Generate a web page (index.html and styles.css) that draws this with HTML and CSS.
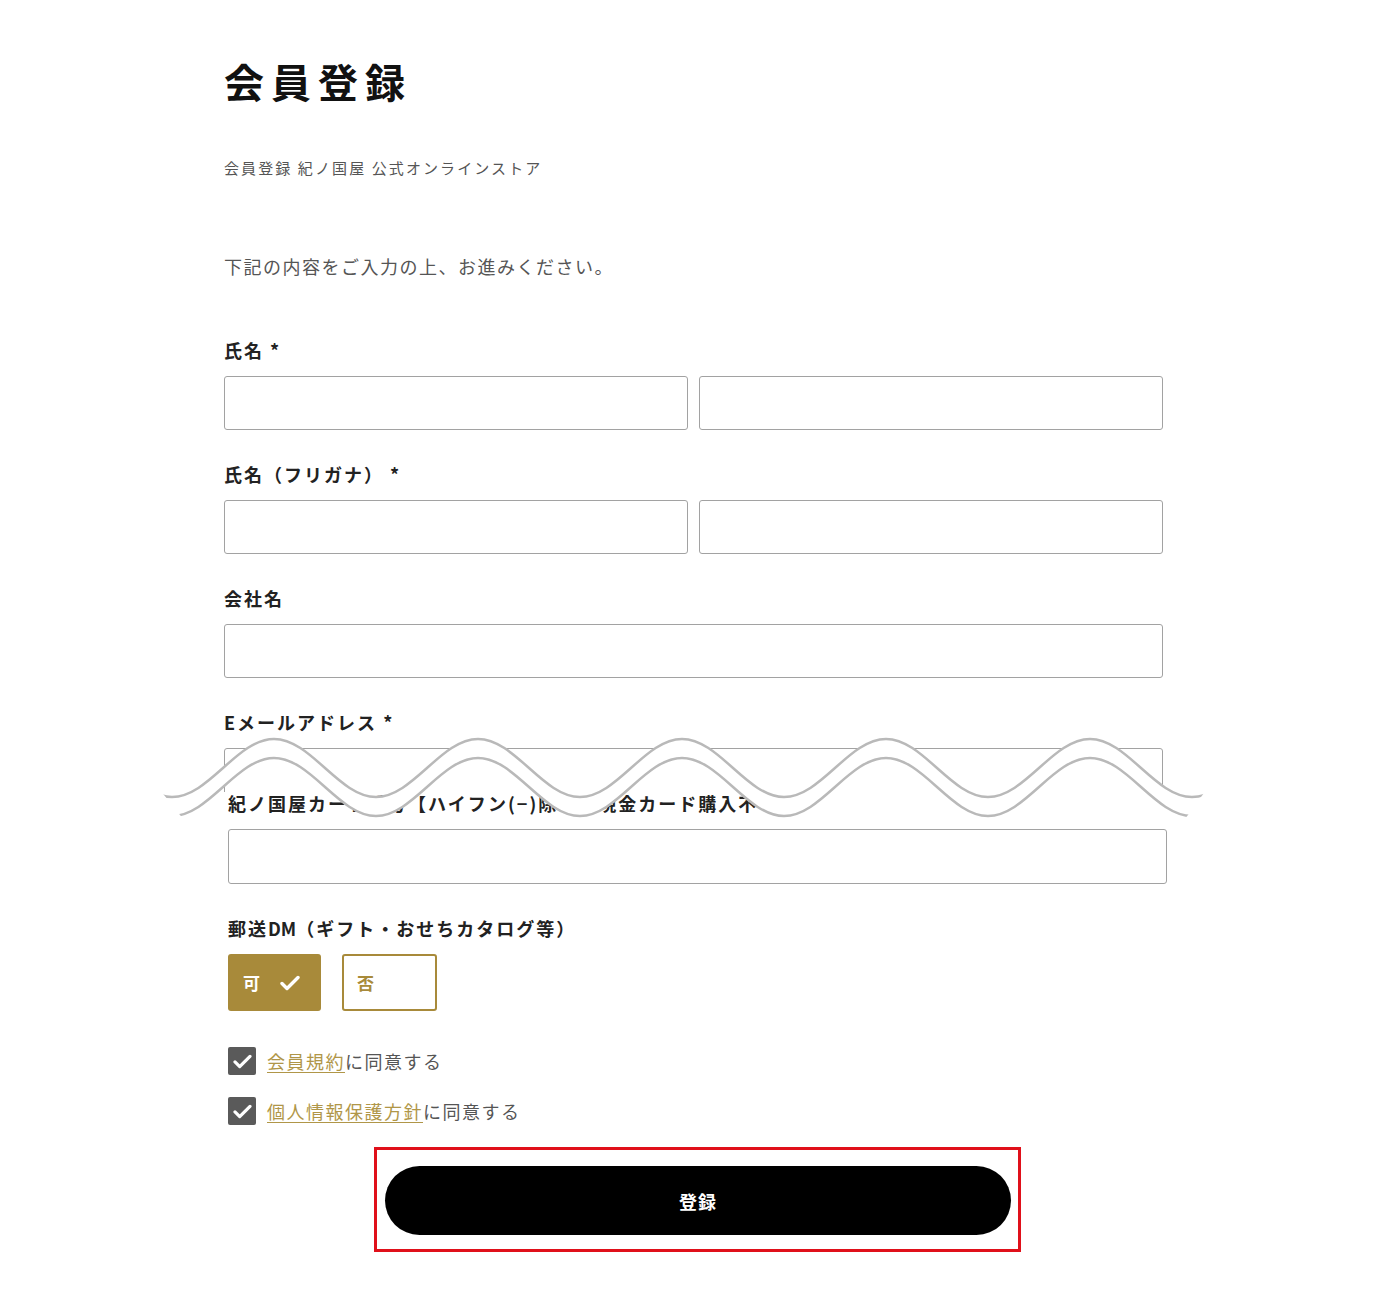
FILE: index.html
```html
<!DOCTYPE html>
<html lang="ja">
  <head>
    <meta charset="utf-8">
    <title>会員登録</title>
    <link rel="stylesheet" href="styles.css">
  </head>
  <body>
    <div class="page">
      <h1 class="title">会員登録</h1>
      <p class="lead">会員登録 紀ノ国屋 公式オンラインストア</p>
      <p class="intro">下記の内容をご入力の上、お進みください。</p>

      <div class="field">
        <div class="label">氏名 *</div>
        <div class="pair">
          <input class="input" type="text">
          <input class="input" type="text">
        </div>
      </div>
      <div class="field">
        <div class="label">氏名（フリガナ） *</div>
        <div class="pair">
          <input class="input" type="text">
          <input class="input" type="text">
        </div>
      </div>
      <div class="field">
        <div class="label">会社名</div>
        <input class="input" type="text">
      </div>
      <div class="field">
        <div class="label">Eメールアドレス *</div>
        <div class="cut-box">
          <input class="input" type="email">
        </div>
      </div>

      <div class="lower">
        <div class="field">
          <div class="label">紀ノ国屋カード番号【ハイフン(−)除く】現金カード購入不可</div>
          <input class="input input-tall" type="text">
        </div>
        <div class="field">
          <div class="label">郵送<span class="latin">DM</span>（ギフト・おせちカタログ等）</div>
          <div class="toggles">
            <span class="toggle toggle-on">可
              <svg class="tick" viewBox="0 0 20 16" width="20" height="16"><path d="M2 8.5l5 5L18 2.5" fill="none" stroke="#fff" stroke-width="3.4" stroke-linecap="round" stroke-linejoin="round"/></svg>
            </span>
            <span class="toggle toggle-off">否</span>
          </div>
        </div>

        <div class="agree">
          <label class="agree-row">
            <span class="box"><svg viewBox="0 0 20 16" width="19" height="15"><path d="M2 8.5l5 5L18 2.5" fill="none" stroke="#fff" stroke-width="3.4" stroke-linecap="round" stroke-linejoin="round"/></svg></span>
            <span><a class="link" href="#">会員規約</a>に同意する</span>
          </label>
          <label class="agree-row">
            <span class="box"><svg viewBox="0 0 20 16" width="19" height="15"><path d="M2 8.5l5 5L18 2.5" fill="none" stroke="#fff" stroke-width="3.4" stroke-linecap="round" stroke-linejoin="round"/></svg></span>
            <span><a class="link" href="#">個人情報保護方針</a>に同意する</span>
          </label>
        </div>

        <div class="submit-wrap">
          <div class="highlight">
            <button class="submit" type="button">登録</button>
          </div>
        </div>
      </div>
    </div>

    <!-- page break marker drawn over the form -->
    <svg class="break" viewBox="150 730 1070 95" width="1070" height="95">
      <defs>
        <clipPath id="cut">
          <polygon points="112,730 1250,730 1177,830 192,830"/>
        </clipPath>
      </defs>
      <g clip-path="url(#cut)">
        <path fill="#fff" d="M70,739 C107,739 135,797 172,797 S237,739 274,739 S339,797 376,797 S441,739 478,739 S543,797 580,797 S645,739 682,739 S747,797 784,797 S849,739 886,739 S951,797 988,797 S1053,739 1090,739 S1155,797 1192,797 S1257,739 1294,739 L1294,758 C1257,758 1229,816 1192,816 S1127,758 1090,758 S1025,816 988,816 S923,758 886,758 S821,816 784,816 S719,758 682,758 S617,816 580,816 S515,758 478,758 S413,816 376,816 S311,758 274,758 S209,816 172,816 S107,758 70,758 Z"/>
        <path fill="none" stroke="#b9b9b9" stroke-width="2.5" d="M70,739 C107,739 135,797 172,797 S237,739 274,739 S339,797 376,797 S441,739 478,739 S543,797 580,797 S645,739 682,739 S747,797 784,797 S849,739 886,739 S951,797 988,797 S1053,739 1090,739 S1155,797 1192,797 S1257,739 1294,739"/>
        <path fill="none" stroke="#b9b9b9" stroke-width="2.5" d="M70,758 C107,758 135,816 172,816 S237,758 274,758 S339,816 376,816 S441,758 478,758 S543,816 580,816 S645,758 682,758 S747,816 784,816 S849,758 886,758 S951,816 988,816 S1053,758 1090,758 S1155,816 1192,816 S1257,758 1294,758"/>
      </g>
    </svg>
  </body>
</html>
```

FILE: styles.css
```css
html, body {
  margin: 0;
  padding: 0;
  background-color: #fff;
}
body {
  position: relative;
  font-family: "Noto Sans CJK JP", "Noto Sans", sans-serif;
  color: #222;
}
.page {
  width: 939px;
  margin-left: 224px;
  padding-top: 57px;
  padding-bottom: 40px;
}
.title {
  margin: 0;
  font-size: 40px;
  line-height: 48px;
  font-weight: 700;
  letter-spacing: 7px;
  color: #111;
}
.lead {
  margin: 52px 0 0;
  font-size: 15px;
  line-height: 22px;
  letter-spacing: 2.1px;
  color: #555;
}
.intro {
  margin: 74px 0 0;
  font-size: 18px;
  line-height: 26px;
  letter-spacing: 1.5px;
  color: #555;
}
.intro + .field {
  margin-top: 60px;
}
.field {
  margin-top: 33px;
}
.cut-box {
  height: 44px;
  overflow: hidden;
}
.label {
  font-size: 18px;
  line-height: 22px;
  font-weight: 700;
  letter-spacing: 2px;
  color: #222;
  margin-bottom: 15px;
  white-space: nowrap;
}
.latin {
  letter-spacing: 0;
}
.pair {
  display: flex;
  gap: 11px;
}
.input {
  display: block;
  box-sizing: border-box;
  width: 100%;
  height: 54px;
  margin: 0;
  padding: 0 14px;
  border: 1px solid #a2a2a2;
  border-radius: 3px;
  background-color: #fff;
  font-family: inherit;
  font-size: 16px;
}
.input-tall {
  height: 55px;
}
.lower {
  width: 939px;
  margin-left: 4px;
}
.lower > .field:first-child {
  margin-top: 0;
}
.toggles {
  display: flex;
  gap: 21px;
}
.toggle {
  display: flex;
  align-items: center;
  box-sizing: border-box;
  height: 57px;
  border-radius: 3px;
  font-size: 17px;
  font-weight: 700;
}
.toggle-on {
  width: 93px;
  padding-left: 15px;
  background-color: #a88a3a;
  color: #fff;
}
.toggle-on .tick {
  margin-left: 20px;
}
.toggle-off {
  width: 95px;
  padding-left: 13px;
  border: 2px solid #a88a3a;
  color: #a88a3a;
}
.agree {
  display: flex;
  flex-direction: column;
  gap: 22px;
  margin-top: 36px;
}
.agree-row {
  display: flex;
  align-items: center;
  gap: 11px;
  font-size: 18px;
  line-height: 28px;
  letter-spacing: 1.5px;
  color: #555;
}
.box {
  display: flex;
  align-items: center;
  justify-content: center;
  width: 28px;
  height: 28px;
  border-radius: 2px;
  background-color: #5a5a5a;
}
.link {
  color: #b09648;
  text-decoration: underline;
  text-underline-offset: 3px;
}
.submit-wrap {
  display: flex;
  justify-content: center;
  margin-top: 22px;
}
.highlight {
  box-sizing: border-box;
  width: 647px;
  padding: 16px 7px 14px 8px;
  border: 3px solid #e0101a;
}
.submit {
  display: block;
  width: 626px;
  height: 69px;
  border: 0;
  border-radius: 35px;
  background-color: #000;
  color: #fff;
  font-family: inherit;
  font-size: 18px;
  font-weight: 700;
  letter-spacing: 1px;
}
.break {
  position: absolute;
  left: 150px;
  top: 730px;
}
```
